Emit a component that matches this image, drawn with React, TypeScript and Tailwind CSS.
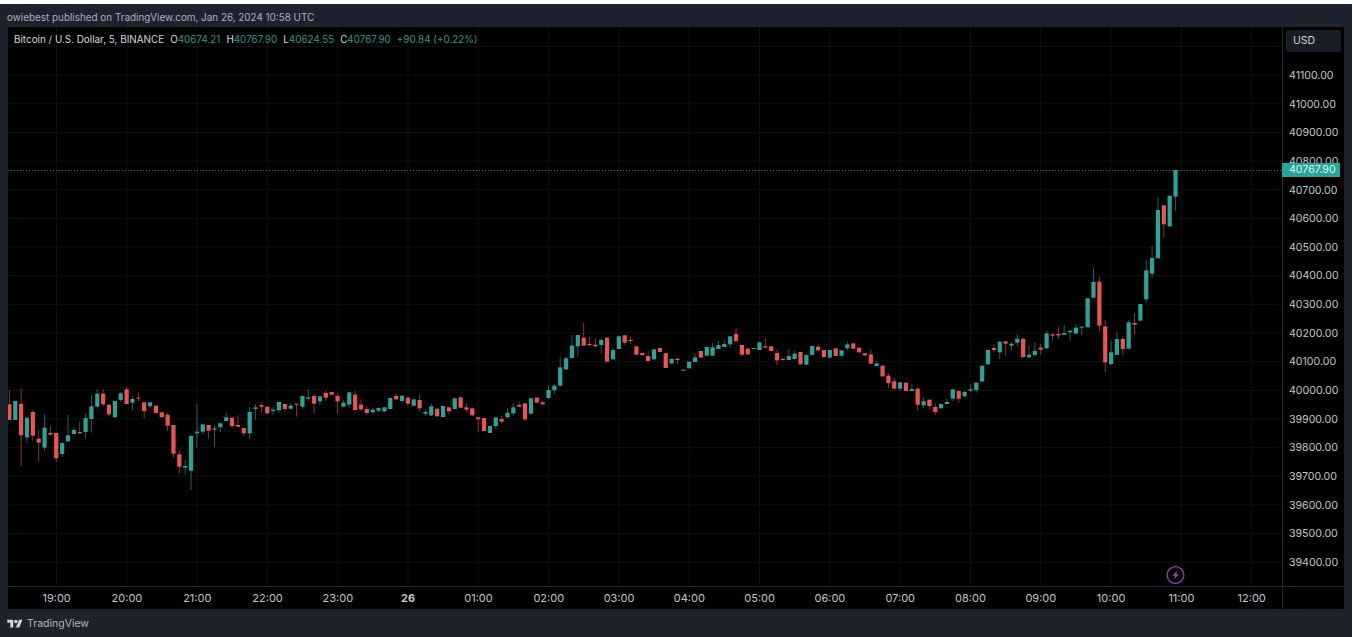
type Candle = [number, number, number, number, number];

// [up, wick top, body top, body bottom, wick bottom], read at 3x, each group has its own y origin
const groups: { y0: number; rows: Candle[] }[] = [
  {
    y0: 370,
    rows: [
      [0,60,103,150,150],[1,93,93,150,150],[0,55,102,196,290],[1,143,143,202,218],[0,120,126,197,213],
      [0,180,206,218,275],[1,133,173,233,243],[0,168,189,194,196],[0,189,189,265,277],[1,219,219,252,260],
      [1,135,196,214,214],[1,174,180,192,192],[0,155,186,190,190],[1,130,144,186,204],[1,75,109,147,188],
      [1,58,71,110,116],[0,58,71,103,110],[0,104,104,133,140],[1,93,93,142,142],[1,66,70,90,97],
      [0,50,58,102,102],[1,78,87,98,120],[0,67,83,86,93],[0,97,97,123,145],[1,97,97,109,116],
      [0,107,107,129,129],[0,125,127,141,143],[0,128,134,167,183],[0,165,165,251,263],[0,240,253,290,310],
      [1,270,288,293,315],[1,193,198,302,360],[1,102,185,190,233],[1,163,163,185,192],[0,165,165,182,205],
      [1,167,175,179,232],[1,158,160,172,186],[1,128,142,153,153],[0,143,143,168,174],[0,136,165,170,170],
      [0,174,174,190,200],[1,110,126,190,208],[1,103,112,117,150],[0,97,105,110,128],[0,110,110,130,133],
      [1,111,119,123,135],[1,96,96,121,128],[0,102,102,117,123],[1,100,107,116,118],[0,100,101,104,140],
      [1,76,78,110,118],[1,58,82,86,92],[0,72,78,101,130],[1,79,79,94,105],[0,62,69,83,93],
      [0,66,66,74,75],[0,70,78,94,130],[1,90,98,110,110],[1,67,67,104,113],[0,62,74,120,120],
      [0,88,104,118,124],[0,110,117,129,137],[1,115,119,127,128],[1,113,114,122,128],[1,111,112,124,128],
      [1,82,84,117,118],[0,70,78,88,91],[1,76,77,93,100],[0,80,83,101,107],[1,88,88,107,110],
      [0,72,90,115,125],[1,120,126,131,138],[1,101,109,136,138],[0,116,116,139,140],[1,108,108,141,142],
      [0,112,112,124,132],[1,85,85,117,118],[0,82,82,113,113],[0,100,112,119,125],[0,112,115,136,137],
      [0,141,142,148,185],[0,144,144,183,183],[1,168,168,189,189],[1,142,142,168,177],[0,138,147,155,160],
      [1,116,128,141,146],[1,100,112,130,137],[0,95,105,110,111],[0,100,100,148,153],[1,83,85,131,133],
      [0,82,83,98,100],[0,93,97,103,105],[1,47,60,84,87],[1,42,47,61,71],
    ],
  },
  {
    y0: 315,
    rows: [
      [1,124,157,212,213],[1,125,130,163,165],[1,60,92,129,129],[1,60,60,94,125],[0,24,68,92,92],
      [0,67,87,90,94],[0,70,89,94,98],[1,70,75,90,115],[0,68,68,140,140],[1,100,105,133,134],
      [1,62,64,102,102],[0,60,61,83,90],[0,66,75,78,87],[0,94,94,119,121],[0,114,114,120,124],
      [0,108,123,138,138],[1,102,103,133,134],[0,99,99,111,111],[0,114,115,159,159],[1,130,132,145,147],
      [0,130,131,135,147],[1,164,164,167,167],[1,140,140,160,161],[1,115,127,141,142],[0,108,108,128,128],
      [1,96,96,122,122],[1,84,97,122,122],[1,78,90,102,102],[1,74,87,96,96],[1,64,64,88,98],
      [0,40,57,78,83],[0,90,90,119,123],[0,97,101,118,120],[1,99,99,102,102],[1,80,82,105,105],
      [0,70,94,98,98],[0,94,94,108,109],[0,103,114,136,150],[0,131,131,135,137],[1,102,123,135,135],
      [1,108,116,132,133],[0,110,111,148,149],[1,118,120,149,150],[1,93,93,120,120],[0,88,95,106,107],
      [0,105,105,126,126],[1,104,105,128,129],[0,100,100,123,123],[1,105,106,122,124],[1,80,88,100,105],
      [0,85,85,101,102],[0,98,98,112,113],[0,115,115,121,125],[0,104,118,146,147],[1,137,145,153,154],
      [0,152,152,184,185],[0,175,182,204,219],[0,188,199,221,221],[1,200,202,221,228],
    ],
  },
  {
    y0: 320,
    rows: [
      [0,188,188,213,213],[1,192,207,213,213],[0,202,206,254,272],[1,233,244,256,265],[0,239,239,258,268],
      [0,250,261,276,285],[1,252,252,265,265],[1,235,246,252,252],[1,208,208,236,244],[0,213,213,236,248],
      [1,213,216,229,234],[1,192,208,212,216],[1,188,188,210,218],[1,137,137,185,185],[1,89,90,133,133],
      [0,72,84,90,97],[1,64,65,97,117],[0,64,64,71,107],[1,66,71,77,92],[1,43,56,68,78],
      [0,52,57,111,115],[1,75,104,112,114],[1,67,93,105,110],[0,72,83,89,103],[1,32,40,85,87],
      [0,40,43,47,62],[0,20,42,46,57],[1,15,39,44,45],[1,28,32,37,63],
    ],
  },
  {
    y0: 160,
    rows: [
      [1,492,503,521,521],[1,498,500,503,525],[1,415,415,502,502],[1,325,366,413,413],[0,350,365,497,515],
      [0,480,499,607,637],[1,542,577,612,616],[1,515,537,585,585],[0,528,537,567,585],[1,480,487,566,568],
      [0,460,489,494,522],[1,432,432,482,482],[1,298,331,418,427],[1,258,294,341,353],[1,110,150,295,295],
      [0,136,136,193,232],[1,107,107,199,201],[1,30,30,110,153],
    ],
  },
];

const candles = groups.flatMap((g) =>
  g.rows.map(([up, wt, bt, bb, wb]) => ({
    up: up === 1,
    wickTop: g.y0 + wt / 3,
    bodyTop: g.y0 + bt / 3,
    bodyBottom: g.y0 + bb / 3,
    wickBottom: g.y0 + wb / 3,
  }))
);

const prices = [
  "41100.00", "41000.00", "40900.00", "40800.00", "40700.00", "40600.00", "40500.00", "40400.00", "40300.00",
  "40200.00", "40100.00", "40000.00", "39900.00", "39800.00", "39700.00", "39600.00", "39500.00", "39400.00",
];
const times = [
  "19:00", "20:00", "21:00", "22:00", "23:00", "26", "01:00", "02:00", "03:00",
  "04:00", "05:00", "06:00", "07:00", "08:00", "09:00", "10:00", "11:00", "12:00",
];
const ohlc = [
  ["O", "40674.21"],
  ["H", "40767.90"],
  ["L", "40624.55"],
  ["C", "40767.90"],
];

const GREEN = "#26a69a";
const RED = "#ef5350";

function Plot() {
  return (
    <svg width={1274} height={559} viewBox="8 27 1274 559" className="block">
      {Array.from({ length: 19 }, (_, i) => (
        <line key={i} x1={8} x2={1282} y1={46.5 + i * 28.65} y2={46.5 + i * 28.65} stroke="#0e0f10" />
      ))}
      {times.map((_, i) => (
        <line key={i} x1={56.5 + i * 70.3} x2={56.5 + i * 70.3} y1={27} y2={586} stroke="#0e0f10" />
      ))}
      <line x1={8} x2={1282} y1={170.5} y2={170.5} stroke={GREEN} strokeOpacity={0.8} strokeDasharray="1 2" />
      {candles.map((c, i) => {
        const x = 9.4 + 5.86 * i;
        const color = c.up ? GREEN : RED;
        return (
          <g key={i}>
            <line x1={x} x2={x} y1={c.wickTop} y2={c.wickBottom} stroke={color} strokeOpacity={0.6} />
            <rect x={x - 2.1} y={c.bodyTop} width={4.2} height={Math.max(c.bodyBottom - c.bodyTop, 1)} fill={color} />
          </g>
        );
      })}
      <circle cx={1175.5} cy={575} r={8.4} fill="#000" stroke="#9c3fb5" strokeWidth={1.3} />
      <path d="M1177.2 570.6l-4.7 5.2h2.7l-1.1 3.6 4.7-5.2h-2.7z" fill="#9c3fb5" />
    </svg>
  );
}

export default function App() {
  return (
    <div className="h-[637px] w-[1353px] overflow-hidden bg-white pt-1 pr-px font-['Inter',sans-serif]">
      <div className="flex h-full flex-col bg-[#1e222d]">
        <div className="flex h-[23px] items-center pt-[3px] pl-[7px] text-[9.9px] text-[#aeb1b8]">
          owiebest published on TradingView.com, Jan 26, 2024 10:58 UTC
        </div>

        <div className="ml-2 flex h-[582px] w-[1336px] bg-black">
          <div className="flex w-[1274px] flex-col">
            <div className="relative h-[559px]">
              <Plot />
              <div className="absolute top-[6px] left-[6px] flex h-3 items-center pt-px text-[9.9px] whitespace-nowrap text-[#d8d9dc]">
                <span>Bitcoin / U.S. Dollar, 5, BINANCE</span>
                {ohlc.map(([k, v]) => (
                  <span key={k} className="ml-[6px]">
                    {k}
                    <span className="text-[#1f9e8e]">{v}</span>
                  </span>
                ))}
                <span className="ml-[6px] text-[#1f9e8e]">+90.84 (+0.22%)</span>
              </div>
            </div>
            <div className="flex h-[23px] items-center border-t border-[#23262e] pl-[13.5px] text-[11px] text-[#c4c5c8]">
              {times.map((t) => (
                <span
                  key={t}
                  className={t === "26" ? "w-[70.3px] shrink-0 text-center font-bold" : "w-[70.3px] shrink-0 text-center"}
                >
                  {t}
                </span>
              ))}
            </div>
          </div>

          <div className="relative flex-1 border-l border-[#23262e]">
            <div className="mt-[3px] ml-[3px] flex h-[22px] w-[55px] items-center rounded-[3px] bg-[#1a1d26] pl-[7px] text-[10.5px] text-[#d1d2d5]">
              USD
            </div>
            <div className="mt-[9.6px] text-[10.6px] text-[#c4c5c8]">
              {prices.map((p) => (
                <div key={p} className="flex h-[28.65px] items-center pl-[6px]">
                  {p}
                </div>
              ))}
            </div>
            <div className="absolute top-[136px] -left-px flex h-[14px] w-[58px] items-center bg-[#26a69a] pl-[7px] text-[10.6px] text-[#dff3f0]">
              40767.90
            </div>
            <div className="absolute inset-x-0 top-[559px] border-t border-[#23262e]" />
          </div>
        </div>

        <div className="flex flex-1 items-center gap-1 pt-px pl-[7px] text-[10.5px] text-[#b4b6bc]">
          <svg width={16} height={12} viewBox="0 0 36 28" fill="#d1d4dc">
            <path d="M14 22H7V11H0V4h14v18zM28 22h-8l7.5-18h8L28 22z" />
            <circle cx={20} cy={8} r={4} />
          </svg>
          <span>TradingView</span>
        </div>
      </div>
    </div>
  );
}
